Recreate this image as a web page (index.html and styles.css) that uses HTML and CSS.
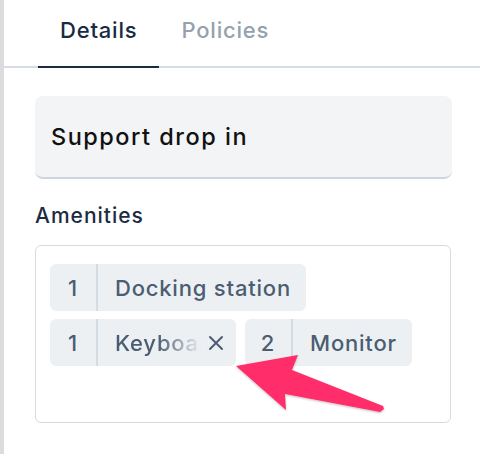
FILE: index.html
```html
<!DOCTYPE html>
<html lang="en">
<head>
<meta charset="utf-8">
<title>Details</title>
<link rel="stylesheet" href="styles.css">
</head>
<body>
<div class="page">
  <nav class="tabs">
    <div class="tab active">Details</div>
    <div class="tab">Policies</div>
  </nav>
  <div class="content">
    <div class="name-field">Support drop in</div>
    <div class="label">Amenities</div>
    <div class="tag-box">
      <div class="tag-row">
        <div class="tag"><span class="qty">1</span><span class="tag-name">Docking station</span></div>
      </div>
      <div class="tag-row">
        <div class="tag hover"><span class="qty">1</span><span class="tag-name clipped">Keyboard</span><span class="remove"><svg width="16" height="16" viewBox="0 0 16 16"><path d="M2 2 L14 14 M14 2 L2 14" stroke="#4b5d72" stroke-width="2" stroke-linecap="round" fill="none"/></svg></span></div>
        <div class="tag"><span class="qty">2</span><span class="tag-name">Monitor</span></div>
      </div>
    </div>
  </div>
  <svg class="arrow" width="480" height="454" viewBox="0 0 480 454">
    <defs>
      <filter id="sh" x="-10%" y="-10%" width="120%" height="130%">
        <feDropShadow dx="0" dy="1" stdDeviation="1.2" flood-color="#000" flood-opacity="0.25"/>
      </filter>
    </defs>
    <polygon filter="url(#sh)" fill="#ff2d6b" points="236,366 298,355 292,370 383,406 384,409 380,412 285,394 286,410"/>
  </svg>
</div>
</body>
</html>
```
FILE: styles.css
```css
html, body {
  margin: 0;
  padding: 0;
  background: #ffffff;
}
body {
  font-family: Inter, "Open Sans", sans-serif;
}
.page {
  position: relative;
  width: 480px;
  height: 454px;
  box-sizing: border-box;
  border-left: 4px solid #dcdcdc;
  overflow: hidden;
}
.tabs {
  display: flex;
  padding-left: 34px;
  border-bottom: 2px solid #d6dde4;
  height: 66px;
  box-sizing: content-box;
}
.tab {
  padding: 0 22px;
  font-size: 22px;
  font-weight: 500;
  letter-spacing: 0.8px;
  color: #95a1ae;
  line-height: 60px;
  height: 66px;
  box-sizing: border-box;
}
.tab.active {
  color: #172b43;
  border-bottom: 2px solid #172b43;
  height: 68px;
}
.content {
  padding: 28px 28px 0 31px;
}
.name-field {
  background: #f3f4f6;
  border-radius: 8px;
  border-bottom: 2px solid #cdd6df;
  height: 81px;
  padding-left: 16px;
  display: flex;
  align-items: center;
  font-size: 23.5px;
  letter-spacing: 1.5px;
  font-weight: 500;
  color: #111111;
}
.label {
  margin-top: 25px;
  font-size: 21px;
  letter-spacing: 1px;
  font-weight: 500;
  color: #1b2c42;
  line-height: 24px;
}
.tag-box {
  margin-top: 17px;
  margin-right: 1px;
  border: 1px solid #d3dbe3;
  border-radius: 6px;
  height: 178px;
  box-sizing: border-box;
  padding: 18px 14px;
  display: flex;
  flex-direction: column;
  gap: 8px;
}
.tag-row {
  display: flex;
  gap: 9px;
}
.tag {
  display: flex;
  align-items: center;
  height: 47px;
  background: #edf0f3;
  border-radius: 6px;
  color: #4b5d72;
  font-size: 22px;
  letter-spacing: 0.8px;
  font-weight: 500;
}
.qty {
  width: 46px;
  text-align: center;
  align-self: stretch;
  display: flex;
  align-items: center;
  justify-content: center;
  border-right: 2px solid #d3dbe3;
}
.tag-name {
  padding: 0 15px 0 17px;
  white-space: nowrap;
}
.tag-name.clipped {
  padding-right: 0;
  width: 92px;
  overflow: hidden;
  -webkit-mask-image: linear-gradient(to right, #000 55%, transparent 95%);
  mask-image: linear-gradient(to right, #000 55%, transparent 95%);
}
.remove {
  display: flex;
  align-items: center;
  padding: 0 12px 0 1px;
}
.arrow {
  position: absolute;
  left: -4px;
  top: 0;
  pointer-events: none;
}
```
